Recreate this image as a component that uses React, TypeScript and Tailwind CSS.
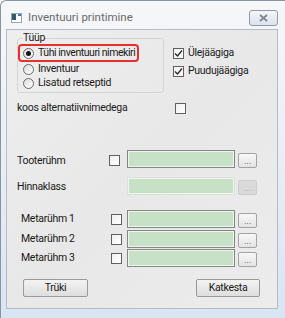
import React from "react";

function Radio({ checked }: { checked?: boolean }) {
  return (
    <span className="w-[11px] h-[11px] rounded-full border border-[#6a6a6a] bg-gradient-to-br from-[#dcdcdc] to-white flex items-center justify-center shrink-0">
      {checked && <span className="w-[5px] h-[5px] rounded-full bg-[#151515]" />}
    </span>
  );
}

function Check({ checked }: { checked?: boolean }) {
  return (
    <span className="w-[11px] h-[11px] border border-[#5f5f5f] bg-gradient-to-br from-[#f0f0f0] to-white flex items-center justify-center shrink-0">
      {checked && (
        <svg width="9" height="9" viewBox="0 0 9 9">
          <path d="M1 4.5 L3.5 7 L8 1.5" fill="none" stroke="#2b2b2b" strokeWidth="1.4" />
        </svg>
      )}
    </span>
  );
}

function GreenInput({ disabled }: { disabled?: boolean }) {
  return (
    <div
      className={
        "w-[108px] h-[18px] shrink-0 border bg-[#c6e1c6] shadow-[inset_0_0_0_1px_#eef6ee] " +
        (disabled ? "border-[#dedede]" : "border-[#858585]")
      }
    />
  );
}

function DotsButton({ disabled }: { disabled?: boolean }) {
  return (
    <div
      className={
        "w-[19px] h-[15px] ml-[3px] mt-[2px] shrink-0 rounded-[2px] border flex items-end justify-center text-[9px] leading-[10px] pb-[1px] tracking-normal " +
        (disabled
          ? "border-[#cdcdcd] bg-[#dadada] text-[#a8a8a8]"
          : "border-[#a3a3a3] bg-gradient-to-b from-[#f7f7f7] to-[#e4e4e4] text-[#2b3f6b]")
      }
    >
      ...
    </div>
  );
}

export default function App() {
  return (
    <div className="w-[285px] h-[318px] overflow-hidden border-l border-t border-[#8a929b] rounded-tl-[6px] bg-gradient-to-b from-[#f6f7f9] via-[#e9eef5] to-[#d8e5f3] flex flex-col font-['Roboto','Liberation_Sans',Arial,sans-serif] text-[#1a1a1a] whitespace-nowrap">
      {/* title bar */}
      <div className="h-[28px] pt-[5px] flex items-center shrink-0">
        <svg className="ml-[10px] shrink-0" width="11" height="10" viewBox="0 0 11 10">
          <rect x="0.5" y="0.5" width="10" height="9" fill="#ffffff" stroke="#9aa4ae" />
          <rect x="1" y="1" width="4" height="6" fill="#2f5e63" />
          <rect x="7" y="1" width="3" height="2" fill="#3a78c8" />
        </svg>
        <span className="ml-[6px] text-[11.5px] leading-[13px] text-[#6a6a6a]">Inventuuri printimine</span>
        <div className="ml-auto mr-[7px] w-[29px] h-[16px] rounded-[3px] border border-[#8d9aab] bg-gradient-to-b from-[#f4f6f9] to-[#dde3eb] flex items-center justify-center">
          <svg width="9" height="8" viewBox="0 0 9 8">
            <path d="M1 1 L8 7 M8 1 L1 7" stroke="#7b8794" strokeWidth="1.8" />
          </svg>
        </div>
      </div>

      {/* client area */}
      <div className="ml-[5px] mr-[7px] h-[280px] border border-[#b4bcc6] bg-gradient-to-br from-[#eeeeee] via-[#e8e8e8] to-[#ececec] flex flex-col pl-[10px] text-[10.5px] leading-[12px] tracking-[-0.3px]">
        <div className="flex items-start mt-[2px]">
          <fieldset className="w-[147px] border border-[#d3d3d3] rounded-[3px] pl-[5px] pb-[2px]">
            <legend className="leading-[12px]">Tüüp</legend>
            <div className="h-[18px] w-[121px] -ml-[5px] border-2 border-[#e5302e] rounded-[4px] pl-[3px] flex items-center gap-[4px]">
              <Radio checked />
              <span className="tracking-[-0.45px]">Tühi inventuuri nimekiri</span>
            </div>
            <div className="h-[14px] flex items-center gap-[4px]">
              <Radio />
              <span>Inventuur</span>
            </div>
            <div className="h-[14px] flex items-center gap-[4px]">
              <Radio />
              <span>Lisatud retseptid</span>
            </div>
          </fieldset>
          <div className="ml-[9px] mt-[15px] flex flex-col gap-[6px]">
            <div className="h-[12px] flex items-center gap-[4px]">
              <Check checked />
              <span>Ülejäägiga</span>
            </div>
            <div className="h-[12px] flex items-center gap-[4px]">
              <Check checked />
              <span>Puudujäägiga</span>
            </div>
          </div>
        </div>

        <div className="mt-[9px] h-[12px] flex items-center">
          <span className="w-[158px]">koos alternatiivnimedega</span>
          <Check />
        </div>

        <div className="mt-[36px] h-[18px] flex items-center">
          <span className="w-[92px] mt-[3px]">Tooterühm</span>
          <span className="mt-[3px]"><Check /></span>
          <span className="ml-[7px]"><GreenInput /></span>
          <DotsButton />
        </div>

        <div className="mt-[9px] h-[18px] flex items-center">
          <span className="w-[110px] mt-[2px]">Hinnaklass</span>
          <GreenInput disabled />
          <DotsButton disabled />
        </div>

        <div className="mt-[15px] flex flex-col">
          {["Metarühm 1", "Metarühm 2", "Metarühm 3"].map((t, i) => (
            <div key={t} className={"h-[18px] flex items-center " + (i === 1 ? "mt-[2px]" : i === 2 ? "mt-[1px]" : "")}>
              <span className="w-[94px] pl-[4px]">{t}</span>
              <Check />
              <span className="ml-[5px]"><GreenInput /></span>
              <DotsButton />
            </div>
          ))}
        </div>

        <div className="mt-[12px] flex">
          <div className="ml-[6px] w-[65px] h-[18px] rounded-[2px] border border-[#9a9a9a] bg-gradient-to-b from-[#f3f3f3] to-[#dedede] flex items-center justify-center">
            Trüki
          </div>
          <div className="ml-auto mr-[17px] w-[64px] h-[18px] rounded-[2px] border border-[#9a9a9a] bg-gradient-to-b from-[#f3f3f3] to-[#dedede] flex items-center justify-center">
            Katkesta
          </div>
        </div>
      </div>
    </div>
  );
}
